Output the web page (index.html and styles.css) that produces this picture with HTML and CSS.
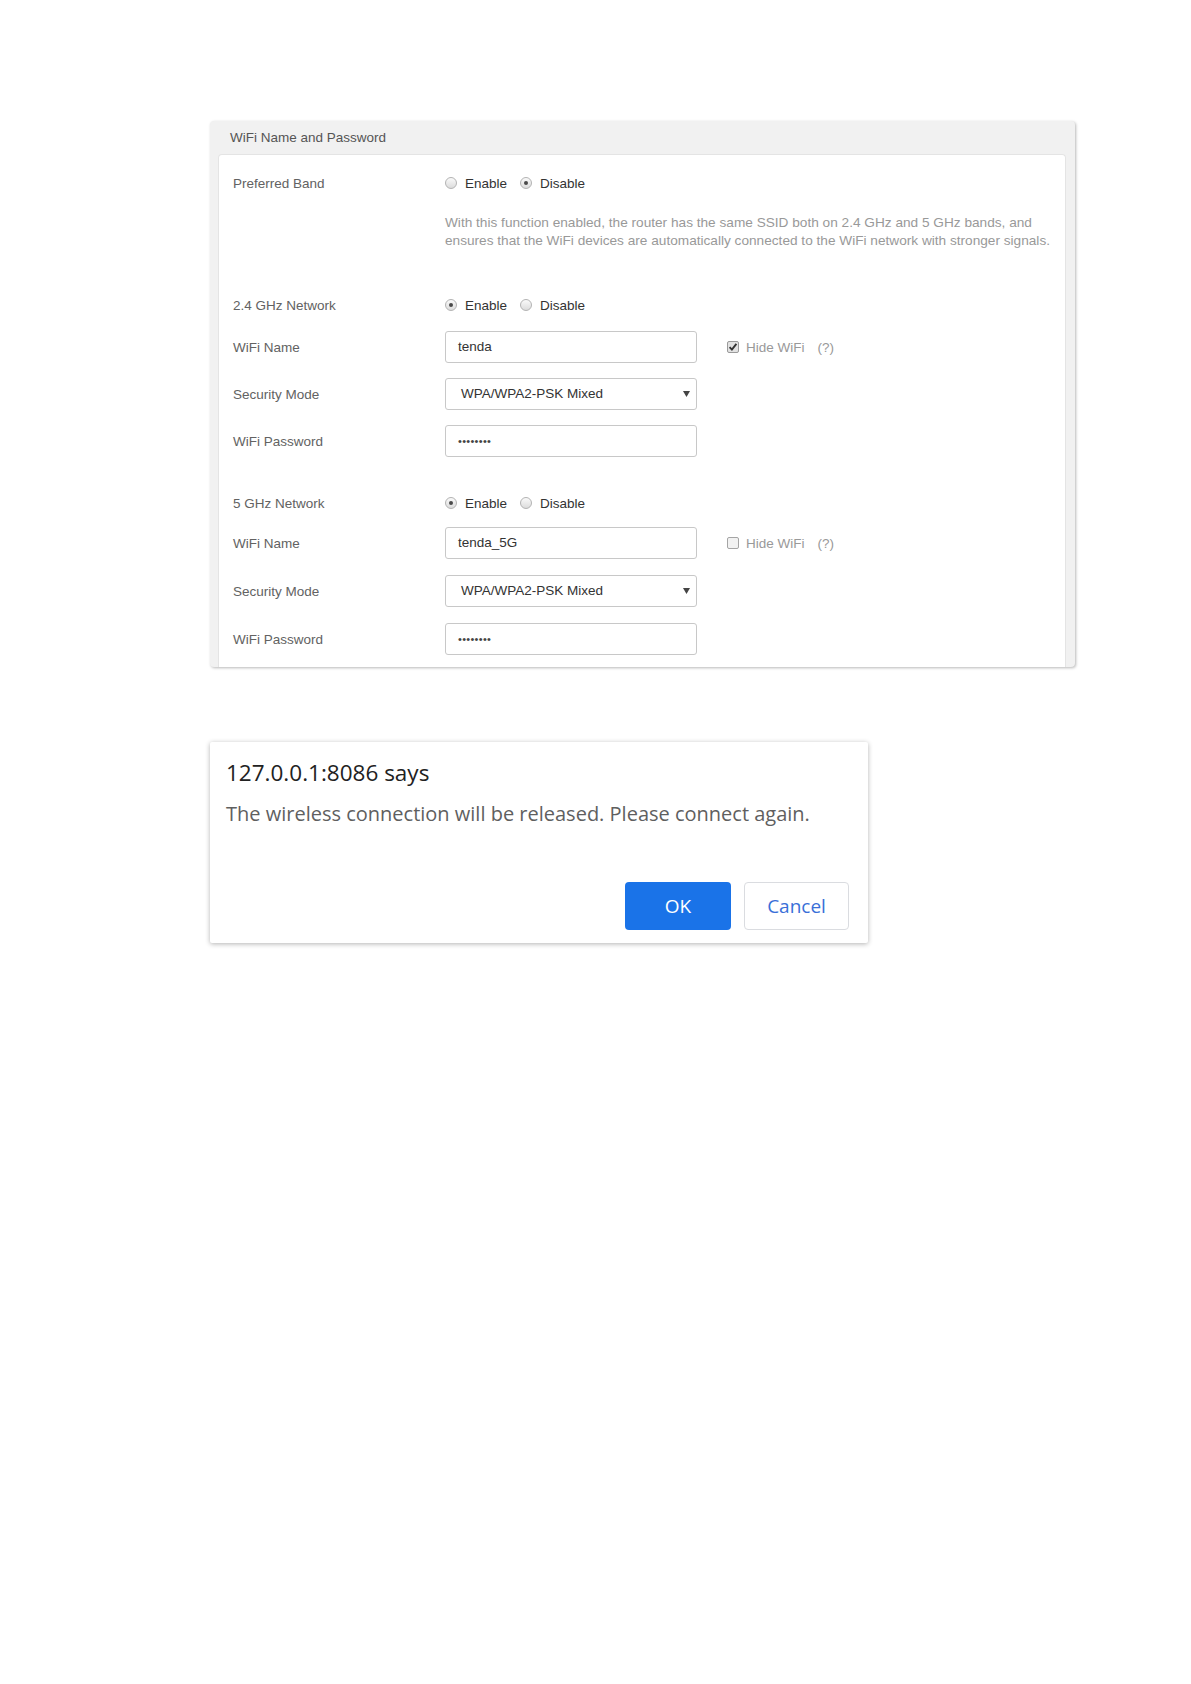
FILE: index.html
```html
<!DOCTYPE html>
<html lang="en">
<head>
<meta charset="utf-8">
<title>WiFi Name and Password</title>
<link rel="stylesheet" href="styles.css">
</head>
<body>
<div class="page">
  <section class="panel">
    <div class="panel-head">WiFi Name and Password</div>
    <div class="panel-body">
      <div class="row">
        <div class="label">Preferred Band</div>
        <div class="radios">
          <span class="radio"></span><span class="rtext">Enable</span>
          <span class="radio on"></span><span class="rtext">Disable</span>
        </div>
      </div>
      <div class="desc">With this function enabled, the router has the same SSID both on 2.4 GHz and 5 GHz bands, and<br>ensures that the WiFi devices are automatically connected to the WiFi network with stronger signals.</div>

      <div class="row net24">
        <div class="label">2.4 GHz Network</div>
        <div class="radios">
          <span class="radio on"></span><span class="rtext">Enable</span>
          <span class="radio"></span><span class="rtext">Disable</span>
        </div>
      </div>
      <div class="row g10">
        <div class="label">WiFi Name</div>
        <div class="field">tenda</div>
        <div class="hide">
          <svg class="check" width="12" height="12" viewBox="0 0 12 12"><rect x="0.5" y="0.5" width="11" height="11" rx="1.5" fill="#e2e2e2" stroke="#9a9a9a"/><path d="M2.6 6.2 L4.9 8.6 L9.4 2.8" fill="none" stroke="#333" stroke-width="1.9"/></svg>
          <span class="htext">Hide WiFi</span><span class="help">(?)</span>
        </div>
      </div>
      <div class="row g15">
        <div class="label">Security Mode</div>
        <div class="field select">WPA/WPA2-PSK Mixed<svg class="arrow" width="7" height="6" viewBox="0 0 7 6"><path d="M0 0 H7 L3.5 6 Z" fill="#444"/></svg></div>
      </div>
      <div class="row g15">
        <div class="label">WiFi Password</div>
        <div class="field pwd">••••••••</div>
      </div>

      <div class="row net5">
        <div class="label">5 GHz Network</div>
        <div class="radios">
          <span class="radio on"></span><span class="rtext">Enable</span>
          <span class="radio"></span><span class="rtext">Disable</span>
        </div>
      </div>
      <div class="row g8">
        <div class="label">WiFi Name</div>
        <div class="field">tenda_5G</div>
        <div class="hide">
          <svg class="check" width="12" height="12" viewBox="0 0 12 12"><rect x="0.5" y="0.5" width="11" height="11" rx="1.5" fill="#f2f2f2" stroke="#a5a5a5"/></svg>
          <span class="htext">Hide WiFi</span><span class="help">(?)</span>
        </div>
      </div>
      <div class="row g16">
        <div class="label">Security Mode</div>
        <div class="field select">WPA/WPA2-PSK Mixed<svg class="arrow" width="7" height="6" viewBox="0 0 7 6"><path d="M0 0 H7 L3.5 6 Z" fill="#444"/></svg></div>
      </div>
      <div class="row g16">
        <div class="label">WiFi Password</div>
        <div class="field pwd">••••••••</div>
      </div>
    </div>
  </section>

  <div class="dialog">
    <div class="d-title">127.0.0.1:8086 says</div>
    <div class="d-msg">The wireless connection will be released. Please connect again.</div>
    <div class="d-actions">
      <button class="btn btn-ok">OK</button>
      <button class="btn btn-cancel">Cancel</button>
    </div>
  </div>
</div>
</body>
</html>
```
FILE: styles.css
```css
html, body {
  margin: 0;
  padding: 0;
  background: #ffffff;
}

.page {
  padding: 121px 0 40px 210px;
  font-family: "Liberation Sans", Arial, sans-serif;
}

.panel {
  width: 865px;
  box-sizing: border-box;
  background: #f1f1f1;
  border-radius: 4px;
  box-shadow: 1px 1px 3px rgba(0, 0, 0, 0.28);
}

.panel-head {
  height: 33px;
  line-height: 33px;
  padding-left: 20px;
  font-size: 13.5px;
  color: #555;
}

.panel-body {
  margin: 0 9px 0 8px;
  background: #fff;
  border: 1px solid #e4e4e4;
  border-bottom: none;
  border-radius: 4px 4px 0 0;
  padding: 12px 0 12px 14px;
}

.row {
  display: grid;
  grid-template-columns: 212px 252px auto;
  align-items: center;
  height: 32px;
}

.net24 { margin-top: 39px; }
.net5 { margin-top: 30px; }
.g8 { margin-top: 8px; }
.g10 { margin-top: 10px; }
.g15 { margin-top: 15px; }
.g16 { margin-top: 16px; }

.label {
  font-size: 13.5px;
  color: #626262;
}

.radios {
  display: flex;
  align-items: center;
  font-size: 13.5px;
  color: #333;
  white-space: nowrap;
}

.radio {
  position: relative;
  display: inline-block;
  width: 12px;
  height: 12px;
  box-sizing: border-box;
  border-radius: 50%;
  border: 1px solid #b3b3b3;
  background: linear-gradient(#fafafa, #dcdcdc);
}

.radio.on::after {
  content: "";
  position: absolute;
  left: 3px;
  top: 3px;
  width: 4px;
  height: 4px;
  border-radius: 50%;
  background: #4a4a4a;
}

.rtext {
  margin-left: 8px;
  margin-right: 13px;
}

.desc {
  margin-top: 15px;
  padding-left: 212px;
  font-size: 13.65px;
  line-height: 18px;
  color: #999;
  white-space: nowrap;
}

.field {
  position: relative;
  height: 32px;
  box-sizing: border-box;
  border: 1px solid #c8c8c8;
  border-radius: 3px;
  padding-left: 12px;
  line-height: 30px;
  font-size: 13.5px;
  color: #333;
  background: #fff;
}

.field.select {
  padding-left: 15px;
}

.field.pwd {
  font-size: 11px;
  letter-spacing: 0.3px;
  color: #444;
}

.arrow {
  position: absolute;
  right: 6px;
  top: 12px;
}

.hide {
  display: flex;
  align-items: center;
  margin-left: 30px;
  font-size: 13.5px;
  color: #999;
  white-space: nowrap;
}

.check {
  display: block;
}

.htext {
  margin-left: 7px;
}

.help {
  margin-left: 13px;
}

.dialog {
  margin-top: 75px;
  width: 658px;
  box-sizing: border-box;
  padding: 16px 19px 13px 16px;
  background: #fff;
  border-radius: 2px;
  box-shadow: 0 1px 5px rgba(0, 0, 0, 0.3);
  font-family: "Open Sans", "Noto Sans", sans-serif;
}

.d-title {
  font-size: 22.5px;
  line-height: 30px;
  color: #222;
}

.d-msg {
  margin-top: 12px;
  font-size: 20px;
  line-height: 28px;
  color: #5f5f5f;
}

.d-actions {
  display: flex;
  justify-content: flex-end;
  gap: 13px;
  margin-top: 54px;
}

.btn {
  height: 48px;
  box-sizing: border-box;
  border-radius: 4px;
  font-family: "Open Sans", "Noto Sans", sans-serif;
  font-size: 19px;
  padding: 0;
  cursor: pointer;
}

.btn-ok {
  width: 106px;
  border: none;
  background: #1a73e8;
  color: #fff;
}

.btn-cancel {
  width: 105px;
  border: 1px solid #dadce0;
  background: #fff;
  color: #3a6fd8;
}
```
